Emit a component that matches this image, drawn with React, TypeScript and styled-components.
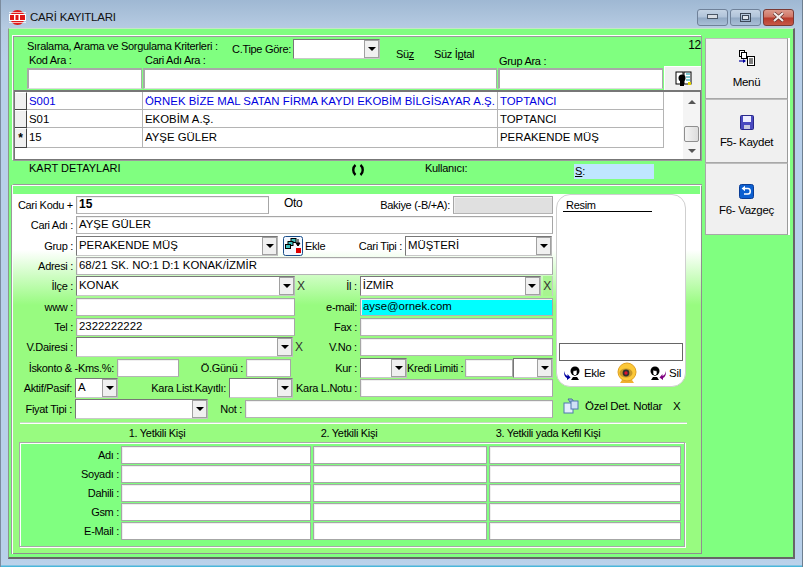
import React from "react";
import styled, { createGlobalStyle } from "styled-components";

const GlobalStyle = createGlobalStyle`
  html, body {
    margin: 0;
    padding: 0;
    background: #b8cfe8;
  }
  * {
    box-sizing: border-box;
  }
`;

const Win = styled.div`
  width: 803px;
  height: 567px;
  display: flex;
  flex-direction: column;
  overflow: hidden;
  font-family: "Liberation Sans", Arial, sans-serif;
  font-size: 11px;
  letter-spacing: -0.3px;
  color: #000;
  background: linear-gradient(180deg, #9fb8d3 0, #b6cbe2 28px, #b8d0ea 60px, #b8d0ea 558px, #bcd2ea 565px, #4ab6da 566px);
  border-left: 1px solid #7c8c9e;
  border-right: 1px solid #6e7f90;
`;

const TitleBar = styled.div`
  height: 28px;
  flex: none;
  display: flex;
  align-items: center;
  padding: 6px 8px 0 8px;
  font-size: 11.5px;
  letter-spacing: -0.2px;
  color: #111;
`;

const TitleText = styled.span`
  margin-left: 4px;
  flex: 1;
`;

const WinBtn = styled.div<{ $w: number; $red?: boolean }>`
  width: ${(p) => p.$w}px;
  height: 17px;
  margin-left: 2px;
  display: flex;
  align-items: center;
  justify-content: center;
  border: 1px solid ${(p) => (p.$red ? "#7a3a34" : "#6f8199")};
  border-radius: 3px;
  background: ${(p) =>
    p.$red
      ? "linear-gradient(180deg, #dc9a8c 0, #cf7464 48%, #b8392a 52%, #c65a47 100%)"
      : "linear-gradient(180deg, #c4d3e4 0, #b0c3d9 48%, #92a9c4 52%, #a9bfd7 100%)"};
`;

const Client = styled.div`
  margin: 0 7px 0 7px;
  height: 531px;
  flex: none;
  display: flex;
  background: #80ff80;
  border-top: 1px solid #c6e6c6;
  border-left: 1px solid #8a9a8a;
  border-right: 2px solid #666;
  border-bottom: 2px solid #666;
  padding: 7px 0 3px 4px;
`;

const Main = styled.div`
  width: 689px;
  flex: none;
  display: flex;
  flex-direction: column;
`;

const TopPanel = styled.div`
  height: 125px;
  flex: none;
  display: flex;
  flex-direction: column;
  border: 1px solid #9a9a9a;
  box-shadow: -1px -1px 0 #fff;
`;

const Header = styled.div`
  height: 31px;
  flex: none;
  display: flex;
  align-items: flex-start;
  padding-left: 13px;
`;

const HeaderCol = styled.div<{ $w: number; $top?: number }>`
  width: ${(p) => p.$w}px;
  flex: none;
  padding-top: ${(p) => p.$top ?? 0}px;
  display: flex;
  flex-direction: column;
`;

const HeaderLine = styled.div<{ $h?: number }>`
  display: flex;
  align-items: center;
  height: ${(p) => p.$h ?? 13}px;
  white-space: nowrap;
`;

const Text = styled.span<{ $w?: number; $ml?: number }>`
  white-space: nowrap;
  flex: none;
  ${(p) => (p.$w ? `width: ${p.$w}px;` : "")}
  ${(p) => (p.$ml ? `margin-left: ${p.$ml}px;` : "")}
`;

const OtoText = styled.span`
  width: 20px;
  margin-left: 15px;
  margin-top: -4px;
  flex: none;
  font-size: 12px;
`;

const IconSlot = styled.span`
  margin-left: 5px;
  flex: none;
  display: flex;
`;

const Count = styled.span`
  margin-left: auto;
  margin-top: 1px;
  font-size: 12px;
`;

const SearchRow = styled.div`
  display: flex;
  height: 22px;
  flex: none;
  padding-left: 13px;
  gap: 1px;
`;

const SearchInput = styled.div<{ $w: number }>`
  width: ${(p) => p.$w}px;
  height: 21px;
  background: #fff;
  border: 1px solid #a8a8a8;
  border-top-width: 2px;
  border-left-width: 2px;
  border-bottom: 1px solid #dcdcdc;
`;

const FindBtn = styled.div`
  flex: 1;
  height: 24px;
  margin-top: -2px;
  background: #f0f0f0;
  border-top: 1px solid #fff;
  border-left: 1px solid #fff;
  display: flex;
  align-items: center;
  justify-content: center;
`;

const Grid = styled.div`
  flex: 1;
  display: flex;
  background: #fff;
  border-top: 2px solid #777;
  border-left: 1px solid #777;
  border-right: 1px solid #777;
  border-bottom: 1px solid #777;
`;

const GridBody = styled.div`
  width: 669px;
  flex: none;
  display: flex;
  flex-direction: column;
`;

const GridRow = styled.div<{ $blue?: boolean }>`
  display: grid;
  grid-template-columns: 12px 116px 355px 166px;
  height: 18px;
  font-size: 11.4px;
  letter-spacing: 0;
  color: ${(p) => (p.$blue ? "#0000e0" : "#000")};
`;

const Selector = styled.div`
  background: #f0f0f0;
  border-bottom: 1px solid #444;
  border-right: 1px solid #444;
  border-top: 1px solid #fff;
  color: #000;
  font-size: 12px;
  font-weight: bold;
  line-height: 18px;
  text-align: center;
`;

const Cell = styled.div`
  padding-left: 2px;
  line-height: 18px;
  white-space: nowrap;
  overflow: hidden;
  border-right: 1px solid #b4b4b4;
  border-bottom: 1px solid #b4b4b4;
`;

const ScrollBar = styled.div`
  flex: 1;
  display: flex;
  flex-direction: column;
  align-items: stretch;
  background: #f4f4f4;
  margin-left: -1px;
  padding-top: 8px;
`;

const ScrollArrow = styled.div<{ $down?: boolean }>`
  height: 0;
  width: 0;
  margin: 0 auto;
  border-left: 4px solid transparent;
  border-right: 4px solid transparent;
  ${(p) => (p.$down ? "border-top: 4px solid #555;" : "border-bottom: 4px solid #555;")}
`;

const ScrollThumb = styled.div`
  height: 16px;
  margin: 22px 1px 7px 1px;
  border: 1px solid #8f8f8f;
  border-radius: 2px;
  background: linear-gradient(90deg, #f4f4f4, #dcdcdc);
`;

const KartStrip = styled.div`
  height: 24px;
  flex: none;
  display: flex;
  align-items: flex-start;
  padding: 0 0 0 16px;
  border-bottom: 1px solid #9a9a9a;
`;

const StripLine = styled.div<{ $w: number }>`
  width: ${(p) => p.$w}px;
  height: 14px;
  flex: none;
  display: flex;
  align-items: center;
`;

const KartTitle = styled(StripLine)`
  letter-spacing: 0;
`;

const SpinSlot = styled(StripLine)`
  height: 18px;
`;

const UserBox = styled.div`
  width: 80px;
  height: 15px;
  margin-top: 3px;
  background: #bfe6ff;
  padding-left: 1px;
  line-height: 15px;
  letter-spacing: 0;
  flex: none;
`;

const FormPanel = styled.div`
  flex: 1;
  display: flex;
  flex-direction: column;
  border-top: 1px solid #fff;
  border-right: 1px solid #8f8f8f;
  border-bottom: 1px solid #8f8f8f;
  box-shadow: inset -1px -1px 0 #fff, -1px 0 0 #fff, -2px 0 0 #9a9a9a;
  padding-top: 8px;
  background: #80ff80;
`;

const FormBody = styled.div`
  flex: 1;
  background: linear-gradient(180deg, #fff 0, #fff 55px, #98fb80 110px, #98fb80 100%);
  border-top: 1px solid #fff;
  display: flex;
  flex-direction: column;
`;

const FormTop = styled.div`
  display: flex;
`;

const FormRows = styled.div`
  width: 543px;
  flex: none;
  display: flex;
  flex-direction: column;
  padding-left: 3px;
`;

const Row = styled.div<{ $h: number }>`
  height: ${(p) => p.$h}px;
  display: flex;
  align-items: center;
  flex: none;
`;

const Label = styled.span<{ $w: number }>`
  width: ${(p) => p.$w}px;
  flex: none;
  text-align: right;
  padding-right: 3px;
  white-space: nowrap;
`;

const Input = styled.div<{ $w: number; $bg?: string; $bold?: boolean }>`
  width: ${(p) => p.$w}px;
  height: 18px;
  flex: none;
  padding-left: 2px;
  line-height: 15px;
  letter-spacing: 0;
  font-size: ${(p) => (p.$bold ? "12px" : "11.4px")};
  font-weight: ${(p) => (p.$bold ? "bold" : "normal")};
  background: ${(p) => p.$bg ?? "#fff"};
  border: 1px solid #a6a6a6;
  border-bottom-color: #b4b4b4;
  box-shadow: inset 1px 1px 0 #efefef;
  white-space: nowrap;
  overflow: hidden;
`;

const Combo = styled.div<{ $w: number }>`
  width: ${(p) => p.$w}px;
  height: 20px;
  flex: none;
  display: flex;
  background: #fff;
  border: 1px solid #777;
  border-right-color: #b8b8b8;
  border-bottom-color: #c8c8c8;
`;

const ComboText = styled.div`
  flex: 1;
  padding-left: 2px;
  line-height: 16px;
  font-size: 11.4px;
  letter-spacing: 0;
  white-space: nowrap;
  overflow: hidden;
`;

const ComboBtn = styled.div`
  width: 15px;
  flex: none;
  background: #f0f0f0;
  border: 1px solid #a0a0a0;
  display: flex;
  align-items: center;
  justify-content: center;
  &::after {
    content: "";
    border-left: 4px solid transparent;
    border-right: 4px solid transparent;
    border-top: 4px solid #000;
  }
`;

const Cross = styled.span<{ $box?: boolean }>`
  margin-left: 2px;
  font-size: 12px;
  color: #333;
  flex: none;
  text-align: center;
  ${(p) =>
    p.$box
      ? `width: 10px; height: 20px; line-height: 20px; background: #a8f490; border-right: 1px solid #c8c8c8;`
      : ""}
`;

const PhotoCol = styled.div`
  flex: 1;
  display: flex;
  flex-direction: column;
`;

const PhotoCard = styled.div`
  width: 130px;
  height: 193px;
  margin-top: -1px;
  flex: none;
  display: flex;
  flex-direction: column;
  background: #fff;
  border: 1px solid #cfcfcf;
  border-radius: 14px;
  padding: 5px 2px 0 2px;
`;

const PhotoTitle = styled.div`
  margin-left: 4px;
  width: 89px;
  height: 12px;
  line-height: 11px;
  padding-left: 3px;
  border-bottom: 1px solid #000;
`;

const PhotoName = styled.div`
  height: 18px;
  margin-top: 131px;
  border: 1px solid #666;
`;

const PhotoActions = styled.div`
  display: flex;
  align-items: center;
  justify-content: space-between;
  padding: 1px 2px 0 5px;
`;

const PhotoAction = styled.div`
  display: flex;
  align-items: center;
  gap: 3px;
  font-size: 11.5px;
`;

const NotesRow = styled.div`
  display: flex;
  align-items: center;
  height: 20px;
  margin-top: 9px;
  padding-left: 7px;
  font-size: 11.5px;
`;

const Separator = styled.div`
  margin: 3px 14px 0 7px;
  height: 2px;
  background: #fff;
  border-top: 1px solid #c4dcc0;
  flex: none;
`;

const ContactHeads = styled.div`
  display: grid;
  grid-template-columns: 274px 110px 288px;
  height: 18px;
  padding-left: 7px;
  align-items: center;
  flex: none;
`;

const ContactHead = styled.div`
  white-space: nowrap;
  display: flex;
  justify-content: center;
`;

const ContactPanel = styled.div`
  width: 666px;
  margin-left: 6px;
  height: 105px;
  flex: none;
  display: grid;
  grid-template-columns: 99px 190px 174px 192px;
  grid-auto-rows: 18px;
  column-gap: 2px;
  row-gap: 1px;
  padding: 3px 0 0 0;
  background: #80ff80;
  border: 1px solid #a8a8a8;
  box-shadow: 1px 1px 0 #fff, inset 1px 1px 0 #fff;
`;

const ContactLabel = styled.div`
  text-align: right;
  line-height: 18px;
`;

const ContactInput = styled.div`
  background: #fff;
  border: 1px solid #a6a6a6;
  box-shadow: inset 1px 1px 0 #efefef;
`;

const Side = styled.div`
  flex: 1;
  display: flex;
  flex-direction: column;
  padding: 2px 0 0 3px;
`;

const SideBtn = styled.div<{ $h: number; $pad: number }>`
  width: 83px;
  height: ${(p) => p.$h}px;
  flex: none;
  display: flex;
  flex-direction: column;
  align-items: center;
  background: #f0f0f0;
  border: 1px solid #a8a8a8;
  border-top-color: #bdbdbd;
  border-right-color: #9a9a9a;
  box-shadow: 2px 0 0 #fff;
  padding-top: ${(p) => p.$pad}px;
  font-size: 11.5px;
`;

const SideIcon = styled.div<{ $gap: number }>`
  height: 20px;
  margin-bottom: ${(p) => p.$gap}px;
  display: flex;
  align-items: center;
  justify-content: center;
`;

const Logo = () => (
  <svg width="17" height="17" viewBox="0 0 17 17">
    <circle cx="8.5" cy="8.5" r="7.5" fill="#e01818" />
    <rect x="0" y="5" width="17" height="7" fill="#fff" />
    <path d="M1 6h4v5H1zM6.5 6h3v5h-3zM11 6h5v5h-5z" fill="#e01818" />
    <path d="M0 3.5h17M0 13.5h17" stroke="#fff" strokeWidth="0.7" />
  </svg>
);

const MinIcon = () => (
  <svg width="11" height="6" viewBox="0 0 11 6">
    <rect x="0.5" y="0.5" width="10" height="4" fill="#d8dde4" stroke="#4a5666" />
  </svg>
);

const MaxIcon = () => (
  <svg width="11" height="9" viewBox="0 0 11 9">
    <rect x="0.5" y="0.5" width="10" height="8" fill="none" stroke="#3c4858" />
    <rect x="2.5" y="2.5" width="6" height="4" fill="#dfe6ee" stroke="#3c4858" />
  </svg>
);

const CloseIcon = () => (
  <svg width="13" height="10" viewBox="0 0 13 10">
    <path d="M2 1l9 8M11 1L2 9" stroke="#5a2a26" strokeWidth="3.4" />
    <path d="M2 1l9 8M11 1L2 9" stroke="#f4ecea" strokeWidth="2.2" />
  </svg>
);

const BookIcon = () => (
  <svg width="17" height="17" viewBox="0 0 17 17">
    <rect x="1" y="2" width="7" height="12" fill="#fff" stroke="#000" />
    <rect x="9" y="2" width="7" height="12" fill="#fff" stroke="#000" />
    <path d="M11 4h4M11 7h4M11 10h4" stroke="#0090a0" />
    <circle cx="7" cy="8" r="3.5" fill="#000" />
    <path d="M5 11h4v5H5z" fill="#000" />
    <path d="M13 12h3v3h-3z" fill="#e0d000" />
  </svg>
);

const SpinIcon = () => (
  <svg width="12" height="12" viewBox="0 0 12 12">
    <path d="M3.5 1C0.5 3.5 0.5 8.5 3.5 11" fill="none" stroke="#000" strokeWidth="2.4" />
    <path d="M8.5 1C11.5 3.5 11.5 8.5 8.5 11" fill="none" stroke="#000" strokeWidth="2.4" />
  </svg>
);

const MenuIcon = () => (
  <svg width="16" height="16" viewBox="0 0 16 16">
    <rect x="0.5" y="0.5" width="5" height="6" fill="#fff" stroke="#000" />
    <rect x="2.5" y="2.5" width="5" height="6" fill="#fff" stroke="#000" />
    <path d="M0 11h6" stroke="#0000a0" strokeWidth="1.2" />
    <path d="M4 9l3 2-3 2z" fill="#0000a0" />
    <rect x="8.5" y="6.5" width="7" height="9" fill="#fff" stroke="#000" />
    <path d="M10 9h4M10 11h4M10 13h4" stroke="#000" />
  </svg>
);

const SaveIcon = () => (
  <svg width="14" height="15" viewBox="0 0 14 15">
    <rect x="0.5" y="0.5" width="13" height="14" rx="1" fill="#4a4ac0" stroke="#28288a" />
    <rect x="3" y="1" width="8" height="6" fill="#eef" />
    <rect x="4" y="10" width="6" height="4" fill="#c8c8e0" />
  </svg>
);

const UndoIcon = () => (
  <svg width="15" height="15" viewBox="0 0 15 15">
    <rect x="0.5" y="0.5" width="14" height="14" rx="2" fill="#0c5fd0" stroke="#0a3d96" />
    <path d="M5 4.5h4c3 0 3 5.5 0 5.5H5" fill="none" stroke="#fff" strokeWidth="1.5" />
    <path d="M6 1.8v5.4L2.6 4.5z" fill="#fff" />
  </svg>
);

const AddGroupIcon = () => (
  <svg width="20" height="20" viewBox="0 0 20 20">
    <rect x="0.5" y="0.5" width="19" height="19" rx="2" fill="#f4f8ff" stroke="#1a4f8a" />
    <rect x="8" y="2.5" width="5" height="4" fill="#40c0c0" stroke="#000" />
    <rect x="5" y="5.5" width="5" height="4" fill="#40c0c0" stroke="#000" />
    <rect x="2.5" y="8.5" width="5" height="4" fill="#40c0c0" stroke="#000" />
    <path d="M15 3v5M13 7h4l-2 3z" fill="#000" stroke="#000" />
    <rect x="13" y="12" width="5" height="5" fill="#e00000" />
  </svg>
);

const PersonArrow = ({ color, flip }: { color: string; flip?: boolean }) => (
  <svg width="17" height="14" viewBox="0 0 17 14" style={flip ? { transform: "scaleX(-1)" } : undefined}>
    <path d="M0.5 5c0 3 1 4 3 5V8l3 3.5L3 14v-2C0.5 11 -0.5 8 0.5 5z" fill={color} />
    <circle cx="11" cy="5" r="4.5" fill="#000" />
    <path d="M9 5l4-1v4l-2 2-2-2z" fill="#fff" stroke="#000" strokeWidth="0.6" />
    <path d="M7 14l2-3h4l2 3z" fill="#000" />
  </svg>
);

const WebcamIcon = () => (
  <svg width="20" height="22" viewBox="0 0 20 22">
    <path d="M5 18h10l2 3H3z" fill="#f0b030" />
    <circle cx="10" cy="10" r="9" fill="#fcc838" stroke="#e0a020" />
    <ellipse cx="9" cy="11" rx="6.5" ry="4.5" fill="#c89828" />
    <circle cx="9" cy="11" r="3.4" fill="#303030" />
    <circle cx="9" cy="11" r="1.7" fill="#e01030" />
  </svg>
);

const NotesIcon = () => (
  <svg width="16" height="16" viewBox="0 0 16 16">
    <path d="M5 1h4l2 3H7z" fill="#a8c4e8" stroke="#4f6f9c" />
    <rect x="1" y="5" width="9" height="10" fill="#e4eefc" stroke="#4f78b0" />
    <rect x="8" y="3" width="7" height="8" fill="#cfe0f6" stroke="#4f78b0" />
  </svg>
);

const rows = [
  { code: "S001", name: "ÖRNEK BİZE MAL SATAN FİRMA KAYDI EKOBİM BİLGİSAYAR A.Ş.", group: "TOPTANCI", blue: true },
  { code: "S01", name: "EKOBİM A.Ş.", group: "TOPTANCI" },
  { code: "15", name: "AYŞE GÜLER", group: "PERAKENDE MÜŞ", current: true },
];

const contactLabels = ["Adı :", "Soyadı :", "Dahili :", "Gsm :", "E-Mail :"];

const App: React.FC = () => {
  return (
    <Win>
      <GlobalStyle />
      <TitleBar>
        <Logo />
        <TitleText>CARİ KAYITLARI</TitleText>
        <WinBtn $w={31}>
          <MinIcon />
        </WinBtn>
        <WinBtn $w={31}>
          <MaxIcon />
        </WinBtn>
        <WinBtn $w={31} $red>
          <CloseIcon />
        </WinBtn>
      </TitleBar>
      <Client>
        <Main>
          <TopPanel>
            <Header>
              <HeaderCol $w={205} $top={2}>
                <HeaderLine $h={14}>Sıralama, Arama ve Sorgulama Kriterleri :</HeaderLine>
                <HeaderLine $h={14}>
                  <Text $w={116} $ml={2}>Kod Ara :</Text>
                  <Text>Cari Adı Ara :</Text>
                </HeaderLine>
              </HeaderCol>
              <HeaderCol $w={164} $top={2}>
                <HeaderLine $h={20}>
                  <Text $w={61}>C.Tipe Göre:</Text>
                  <Combo $w={87}>
                    <ComboText />
                    <ComboBtn />
                  </Combo>
                </HeaderLine>
              </HeaderCol>
              <HeaderCol $w={103} $top={10}>
                <HeaderLine>
                  <Text $w={38}>Sü<u>z</u></Text>
                  <Text>Süz İ<u>p</u>tal</Text>
                </HeaderLine>
              </HeaderCol>
              <HeaderCol $w={100} $top={17}>
                <HeaderLine>Grup Ara :</HeaderLine>
              </HeaderCol>
              <Count>12</Count>
            </Header>
            <SearchRow>
              <SearchInput $w={115} />
              <SearchInput $w={354} />
              <SearchInput $w={165} />
              <FindBtn>
                <BookIcon />
              </FindBtn>
            </SearchRow>
            <Grid>
              <GridBody>
                {rows.map((r) => (
                  <GridRow key={r.code} $blue={r.blue}>
                    <Selector>{r.current ? "*" : ""}</Selector>
                    <Cell>{r.code}</Cell>
                    <Cell>{r.name}</Cell>
                    <Cell>{r.group}</Cell>
                  </GridRow>
                ))}
              </GridBody>
              <ScrollBar>
                <ScrollArrow />
                <ScrollThumb />
                <ScrollArrow $down />
              </ScrollBar>
            </Grid>
          </TopPanel>
          <KartStrip>
            <KartTitle $w={323}>KART DETAYLARI</KartTitle>
            <SpinSlot $w={73}>
              <SpinIcon />
            </SpinSlot>
            <StripLine $w={149}>Kullanıcı:</StripLine>
            <UserBox><u>S</u>:</UserBox>
          </KartStrip>
          <FormPanel>
            <FormBody>
              <FormTop>
                <FormRows>
                  <Row $h={20}>
                    <Label $w={60}>Cari Kodu +</Label>
                    <Input $w={193} $bold>15</Input>
                    <OtoText>Oto</OtoText>
                    <Label $w={149}>Bakiye (-B/+A):</Label>
                    <Input $w={100} $bg="#e0e0e0" />
                  </Row>
                  <Row $h={20}>
                    <Label $w={60}>Cari Adı :</Label>
                    <Input $w={477}>AYŞE GÜLER</Input>
                  </Row>
                  <Row $h={21}>
                    <Label $w={60}>Grup :</Label>
                    <Combo $w={202}>
                      <ComboText>PERAKENDE MÜŞ</ComboText>
                      <ComboBtn />
                    </Combo>
                    <IconSlot>
                      <AddGroupIcon />
                    </IconSlot>
                    <Text $ml={2} $w={22}>Ekle</Text>
                    <Label $w={78}>Cari Tipi :</Label>
                    <Combo $w={147}>
                      <ComboText>MÜŞTERİ</ComboText>
                      <ComboBtn />
                    </Combo>
                  </Row>
                  <Row $h={19}>
                    <Label $w={60}>Adresi :</Label>
                    <Input $w={477}>68/21 SK. NO:1 D:1 KONAK/İZMİR</Input>
                  </Row>
                  <Row $h={22}>
                    <Label $w={60}>İlçe :</Label>
                    <Combo $w={219}>
                      <ComboText>KONAK</ComboText>
                      <ComboBtn />
                    </Combo>
                    <Cross>X</Cross>
                    <Label $w={55}>İl :</Label>
                    <Combo $w={181}>
                      <ComboText>İZMİR</ComboText>
                      <ComboBtn />
                    </Combo>
                    <Cross $box>X</Cross>
                  </Row>
                  <Row $h={20}>
                    <Label $w={60}>www :</Label>
                    <Input $w={219} />
                    <Label $w={65}>e-mail:</Label>
                    <Input $w={193} $bg="#00ffff">ayse@ornek.com</Input>
                  </Row>
                  <Row $h={20}>
                    <Label $w={60}>Tel :</Label>
                    <Input $w={219}>2322222222</Input>
                    <Label $w={65}>Fax :</Label>
                    <Input $w={193} />
                  </Row>
                  <Row $h={20}>
                    <Label $w={60}>V.Dairesi :</Label>
                    <Combo $w={217}>
                      <ComboText />
                      <ComboBtn />
                    </Combo>
                    <Cross>X</Cross>
                    <Label $w={57}>V.No :</Label>
                    <Input $w={193} />
                  </Row>
                  <Row $h={21}>
                    <Label $w={101}>İskonto &amp; -Kms.%:</Label>
                    <Input $w={62} />
                    <Label $w={67}>Ö.Günü :</Label>
                    <Input $w={45} />
                    <Label $w={69}>Kur :</Label>
                    <Combo $w={47}>
                      <ComboText />
                      <ComboBtn />
                    </Combo>
                    <Label $w={58}>Kredi Limiti :</Label>
                    <Input $w={48} />
                    <Combo $w={40}>
                      <ComboText />
                      <ComboBtn />
                    </Combo>
                  </Row>
                  <Row $h={20}>
                    <Label $w={59}>Aktif/Pasif:</Label>
                    <Combo $w={43}>
                      <ComboText>A</ComboText>
                      <ComboBtn />
                    </Combo>
                    <Label $w={111}>Kara List.Kayıtlı:</Label>
                    <Combo $w={64}>
                      <ComboText />
                      <ComboBtn />
                    </Combo>
                    <Label $w={67}>Kara L.Notu :</Label>
                    <Input $w={193} />
                  </Row>
                  <Row $h={21}>
                    <Label $w={59}>Fiyat Tipi :</Label>
                    <Combo $w={133}>
                      <ComboText />
                      <ComboBtn />
                    </Combo>
                    <Label $w={37}>Not :</Label>
                    <Input $w={308} />
                  </Row>
                </FormRows>
                <PhotoCol>
                  <PhotoCard>
                    <PhotoTitle>Resim</PhotoTitle>
                    <PhotoName />
                    <PhotoActions>
                      <PhotoAction>
                        <PersonArrow color="#0000a0" />
                        Ekle
                      </PhotoAction>
                      <WebcamIcon />
                      <PhotoAction>
                        <PersonArrow color="#800080" flip />
                        Sil
                      </PhotoAction>
                    </PhotoActions>
                  </PhotoCard>
                  <NotesRow>
                    <NotesIcon />
                    <Text $ml={6}>Özel Det. Notlar</Text>
                    <Text $ml={11}>X</Text>
                  </NotesRow>
                </PhotoCol>
              </FormTop>
              <Separator />
              <ContactHeads>
                <ContactHead>1. Yetkili Kişi</ContactHead>
                <ContactHead>2. Yetkili Kişi</ContactHead>
                <ContactHead>3. Yetkili yada Kefil Kişi</ContactHead>
              </ContactHeads>
              <ContactPanel>
                {contactLabels.map((label) => (
                  <React.Fragment key={label}>
                    <ContactLabel>{label}</ContactLabel>
                    <ContactInput />
                    <ContactInput />
                    <ContactInput />
                  </React.Fragment>
                ))}
              </ContactPanel>
            </FormBody>
          </FormPanel>
        </Main>
        <Side>
          <SideBtn $h={61} $pad={9}>
            <SideIcon $gap={8}>
              <MenuIcon />
            </SideIcon>
            Menü
          </SideBtn>
          <SideBtn $h={64} $pad={12}>
            <SideIcon $gap={4}>
              <SaveIcon />
            </SideIcon>
            F5- Kaydet
          </SideBtn>
          <SideBtn $h={72} $pad={17}>
            <SideIcon $gap={3}>
              <UndoIcon />
            </SideIcon>
            F6- Vazgeç
          </SideBtn>
        </Side>
      </Client>
    </Win>
  );
};

export default App;
